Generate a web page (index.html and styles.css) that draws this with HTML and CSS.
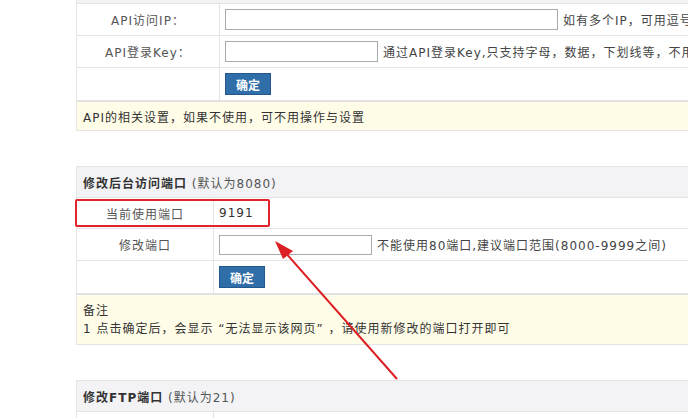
FILE: index.html
```html
<!DOCTYPE html>
<html lang="zh-CN">
<head>
    <meta charset="UTF-8">
    <meta name="viewport" content="width=device-width, initial-scale=1.0">
    <title>端口设置</title>
    <link rel="stylesheet" href="styles.css">
</head>
<body>
    <div class="page">
        <table class="form form-api">
            <tr class="head"><td colspan="2">API设置</td></tr>
            <tr>
                <td class="label">API访问IP<span class="cjk">：</span></td>
                <td><input type="text" class="ip"><span class="tip">如有多个IP，可用逗号隔开，不填写则不限制访问IP</span></td>
            </tr>
            <tr>
                <td class="label">API登录Key<span class="cjk">：</span></td>
                <td><input type="text" class="key"><span class="tip">通过API登录Key,只支持字母，数据，下划线等，不用则留空</span></td>
            </tr>
            <tr class="act">
                <td class="label"></td>
                <td><button class="btn">确定</button></td>
            </tr>
            <tr class="note"><td colspan="2">API的相关设置，如果不使用，可不用操作与设置</td></tr>
        </table>

        <table class="form form-port">
            <tr class="head"><td colspan="2"><b>修改后台访问端口</b> (默认为8080)</td></tr>
            <tr class="short">
                <td class="label">当前使用端口</td>
                <td class="value">9191</td>
            </tr>
            <tr>
                <td class="label">修改端口</td>
                <td><input type="text" class="port"><span class="tip">不能使用80端口,建议端口范围(8000-9999之间)</span></td>
            </tr>
            <tr class="act">
                <td class="label"></td>
                <td><button class="btn">确定</button></td>
            </tr>
            <tr class="note tall"><td colspan="2">备注<br>1 点击确定后，会显示 “无法显示该网页” ，请使用新修改的端口打开即可</td></tr>
        </table>

        <table class="form form-port">
            <tr class="head"><td colspan="2"><b>修改FTP端口</b> (默认为21)</td></tr>
            <tr>
                <td class="label">当前使用端口</td>
                <td class="value">21</td>
            </tr>
        </table>
    </div>

    <!-- annotation overlay -->
    <div class="mark"></div>
    <svg class="arrow" width="688" height="418" viewBox="0 0 688 418">
        <line x1="397" y1="379" x2="284" y2="251" stroke="#dc1f24" stroke-width="2"/>
        <polygon points="275,241 293,251 283,259" fill="#dc1f24"/>
    </svg>
</body>
</html>
```

FILE: styles.css
```css
body {
    margin: 0;
    background: #fff;
    font-family: "DejaVu Sans", "Noto Sans CJK SC", sans-serif;
    font-size: 12px;
    color: #333;
    overflow: hidden;
    letter-spacing: 1px;
}
.page {
    padding-left: 76px;
    margin-top: -29px;
    width: 900px;
}
.form {
    width: 900px;
    border-collapse: collapse;
    margin-bottom: 35px;
}
.form td {
    border: 1px solid #e4e4e4;
    height: 31px;
    padding: 0 5px;
    white-space: nowrap;
}
.form .act td {
    height: 32px;
}
.form-port .head td,
.form-port .short td {
    height: 30px;
}
.form-api .label {
    width: 132px;
}
.form-port .label {
    width: 126px;
}
.form .label {
    text-align: center;
    color: #555;
}
.cjk {
    font-family: "Noto Sans CJK SC", sans-serif;
}
.form .value {
    color: #333;
}
.head td {
    background: #f3f3f5;
    color: #555;
    padding-left: 6px;
}
.head b {
    color: #333;
}
.form .note td {
    background: #fffde8;
    border-top: 2px solid #e2e2e2;
    padding-left: 6px;
    height: 28px;
}
.form .note.tall td {
    height: 49px;
    line-height: 18px;
}
input {
    height: 21px;
    box-sizing: border-box;
    border: 1px solid #aaa;
    margin: 0;
    vertical-align: middle;
}
input.ip {
    width: 333px;
}
input.key {
    width: 153px;
}
input.port {
    width: 153px;
    height: 20px;
}
.tip {
    margin-left: 5px;
    vertical-align: middle;
    color: #444;
}
.btn {
    width: 46px;
    height: 22px;
    background: #2f6ea9;
    border: 1px solid #22588c;
    color: #fff;
    font-family: "Noto Sans CJK SC", sans-serif;
    font-size: 12px;
    font-weight: bold;
    padding: 0;
    vertical-align: middle;
}
.mark {
    position: absolute;
    left: 75px;
    top: 199px;
    width: 191px;
    height: 24px;
    border: 2px solid #e0242b;
    border-radius: 2px;
}
.arrow {
    position: absolute;
    left: 0;
    top: 0;
}
```
